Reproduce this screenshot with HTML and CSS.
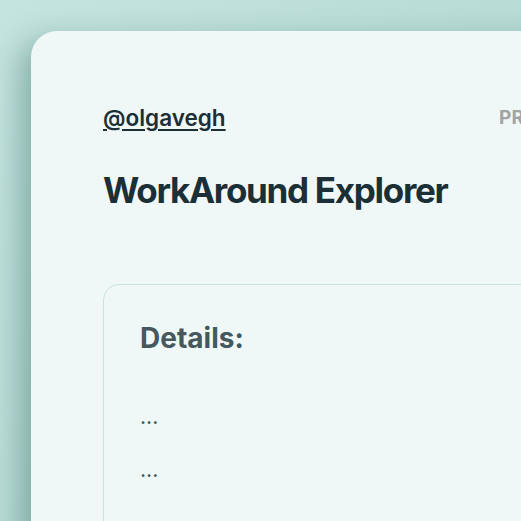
FILE: index.html
```html
<!DOCTYPE html>
<html lang="en">
<head>
<meta charset="utf-8">
<title>WorkAround Explorer</title>
<link rel="stylesheet" href="styles.css">
</head>
<body>
<main class="card">
  <header class="top">
    <a class="handle" href="#">@olgavegh</a>
    <nav class="nav">PROJECTS</nav>
  </header>
  <h1 class="title">WorkAround Explorer</h1>
  <section class="details">
    <h2 class="details-title">Details:</h2>
    <p class="line">...</p>
    <p class="line">...</p>
  </section>
</main>
</body>
</html>
```

FILE: styles.css
```css
html, body {
  margin: 0;
  height: 100%;
}
body {
  overflow: hidden;
  background: linear-gradient(135deg, #c4e4df 0%, #b9dcd6 50%, #a9d0c9 100%);
  font-family: Inter, "Noto Sans", sans-serif;
  padding: 31px 0 0 31px;
  box-sizing: border-box;
}
.card {
  width: 1000px;
  min-height: 700px;
  background: #eff8f6;
  border-radius: 26px 0 0 0;
  box-shadow: -10px 10px 30px rgba(40, 95, 85, 0.4);
  padding: 73px 0 0 72px;
  box-sizing: border-box;
}
.top {
  display: grid;
  grid-template-columns: 396px auto;
  align-items: center;
  height: 28px;
}
.handle {
  font-size: 22.5px;
  line-height: 28px;
  font-weight: 600;
  color: #1b2f36;
  text-decoration: underline;
  text-underline-offset: 3px;
  text-decoration-thickness: 2px;
  justify-self: start;
}
.nav {
  font-size: 19px;
  line-height: 28px;
  font-weight: 700;
  color: #a0a4a4;
  letter-spacing: 0.01em;
}
.title {
  margin: 37px 0 0 0;
  font-size: 35px;
  font-weight: 700;
  letter-spacing: -0.037em;
  color: #1b2f36;
  line-height: 42px;
}
.details {
  margin-top: 73px;
  border: 1px solid #c5e5df;
  border-radius: 16px;
  padding: 36px 0 0 36px;
  min-height: 300px;
}
.details-title {
  margin: 0;
  font-size: 28px;
  font-weight: 700;
  color: #44585d;
  line-height: 34px;
}
.line {
  margin: 0;
  font-size: 20px;
  font-weight: 500;
  color: #44585d;
  line-height: 53px;
}
.details-title + .line {
  margin-top: 36px;
}
```
